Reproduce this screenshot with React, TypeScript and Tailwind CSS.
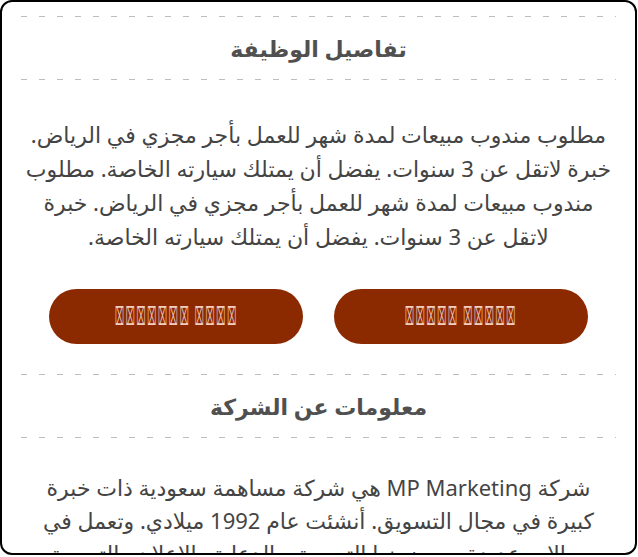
const dashed =
  "h-px w-full bg-[repeating-linear-gradient(to_right,#bdbdbd_0_6px,transparent_6px_18px)]";

function SectionTitle({ children }: { children: React.ReactNode }) {
  return (
    <>
      <div className={dashed} />
      <h2 className="h-[62px] flex items-center justify-center text-[22px] font-bold text-[#505050]">
        {children}
      </h2>
      <div className={dashed} />
    </>
  );
}

function Btn({ label }: { label: string }) {
  return (
    <button className="w-[254px] h-[55px] rounded-full bg-[#8b2a00] flex items-center justify-center">
      <span
        dir="ltr"
        className="inline-block whitespace-nowrap scale-x-[0.31] font-['DejaVu_Sans',sans-serif] text-[25px] leading-none tracking-[6px] text-[#f3cfc0]"
      >
        {label}
      </span>
    </button>
  );
}

export default function App() {
  return (
    <div
      dir="rtl"
      className="w-[637px] h-[555px] overflow-hidden border-2 border-black rounded-xl bg-white font-['Noto_Sans','DejaVu_Sans',sans-serif]"
    >
      <div className="px-[19px] pt-[14px]">
        <SectionTitle>تفاصيل الوظيفة</SectionTitle>

        <p className="pt-[37px] px-1 text-center text-[22px] leading-[34px] text-[#444]">
          مطلوب مندوب مبيعات لمدة شهر للعمل بأجر مجزي في الرياض. خبرة لاتقل عن 3
          سنوات. يفضل أن يمتلك سيارته الخاصة. مطلوب مندوب مبيعات لمدة شهر للعمل
          بأجر مجزي في الرياض. خبرة لاتقل عن 3 سنوات. يفضل أن يمتلك سيارته الخاصة.
        </p>

        <div className="flex justify-center gap-[31px] pt-[36px] pb-[30px]">
          <Btn label="⌧⌧⌧⌧⌧ ⌧⌧⌧⌧⌧" />
          <Btn label="⌧⌧⌧⌧⌧⌧⌧ ⌧⌧⌧⌧" />
        </div>

        <SectionTitle>معلومات عن الشركة</SectionTitle>

        <p className="pt-[33px] px-1 text-center text-[22px] leading-[33px] text-[#444]">
          شركة MP Marketing هي شركة مساهمة سعودية ذات خبرة كبيرة في مجال التسويق.
          أنشئت عام 1992 ميلادي. وتعمل في مجالات عديدة من ضمنها التسويق والدعاية
          والاعلان والتسويق الالكتروني.
        </p>
      </div>
    </div>
  );
}
